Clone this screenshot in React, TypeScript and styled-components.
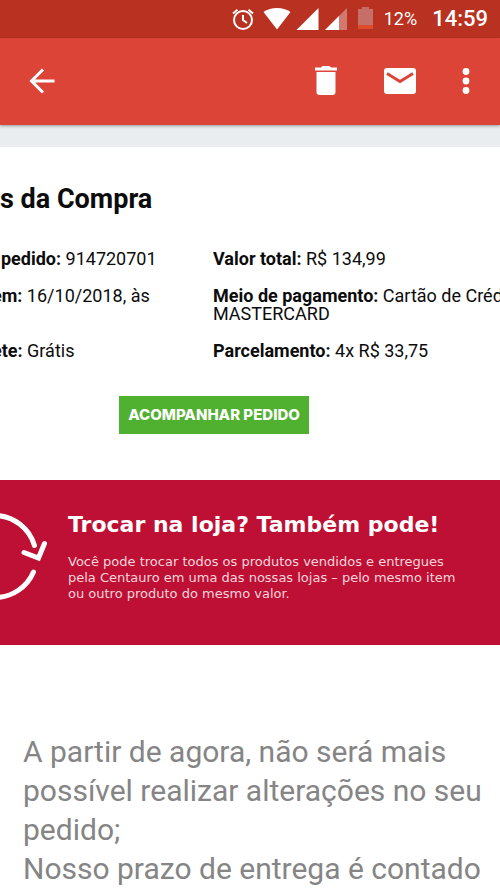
import React from "react";
import styled, { createGlobalStyle } from "styled-components";

const GlobalStyle = createGlobalStyle`
  *, *::before, *::after { box-sizing: border-box; }
  body {
    margin: 0;
    background: #ffffff;
    color: #0c0c0c;
    font-family: Roboto, sans-serif;
    overflow: hidden;
  }
`;

const StatusBar = styled.div`
  display: flex;
  align-items: center;
  justify-content: flex-end;
  height: 38px;
  padding-right: 12px;
  background: #b93221;
  color: #ffffff;

  svg { display: block; }
`;

const StatusIcons = styled.div`
  display: flex;
  align-items: center;
  gap: 5px;

  svg:first-child { margin-right: 3px; }
`;

const Battery = styled.span`
  margin-left: 5px;
  font-size: 18px;
  line-height: 24px;
`;

const Clock = styled.time`
  margin-left: 15px;
  font-size: 22px;
  font-weight: 500;
  line-height: 24px;
`;

const Toolbar = styled.header`
  position: relative;
  display: flex;
  align-items: center;
  justify-content: space-between;
  height: 87px;
  padding: 0 18px 2px;
  background: #db4437;
  box-shadow: 0 1px 3px rgba(0, 0, 0, 0.35);
`;

const Actions = styled.div`
  display: flex;
  align-items: center;
  gap: 26px;
`;

const IconButton = styled.button<{ $width?: number }>`
  display: flex;
  align-items: center;
  justify-content: center;
  width: ${({ $width }) => $width ?? 48}px;
  height: 48px;
  padding: 0;
  border: 0;
  background: none;
  color: #ffffff;
`;

const Strip = styled.div`
  height: 22px;
  background: #e9edf0;
`;

const Summary = styled.section`
  display: flex;
  flex-direction: column;
  padding: 36px 0 46px;
`;

const Title = styled.h1`
  margin: 0;
  font-size: 27px;
  font-weight: 700;
  line-height: 32px;
`;

const Details = styled.dl`
  display: grid;
  grid-template-columns: 221px minmax(0, 1fr);
  row-gap: 19px;
  margin: 35px 0 0 -8px;
  font-size: 18px;
  line-height: 18px;
  white-space: nowrap;
`;

const Detail = styled.div`
  dt, dd { display: inline; margin: 0; }
  dt { font-weight: 700; }
`;

const TrackLink = styled.a`
  align-self: center;
  margin: 36px 72px 0 0;
  padding: 0 9px;
  background: #50b030;
  color: #ffffff;
  font-family: Inter, sans-serif;
  font-size: 15px;
  font-weight: 800;
  line-height: 38px;
  text-decoration: none;
`;

const Banner = styled.section`
  display: flex;
  align-items: flex-start;
  gap: 18px;
  min-height: 165px;
  padding: 31px 20px 30px 0;
  background: #be1034;
  color: #ffffff;
  font-family: "DejaVu Sans", Verdana, sans-serif;

  svg { flex: none; }
`;

const BannerTitle = styled.h2`
  margin: 0 0 15px;
  font-size: 22px;
  font-weight: 700;
  line-height: 28px;
  white-space: nowrap;
`;

const BannerText = styled.p`
  margin: 0;
  font-size: 13px;
  line-height: 16px;
  color: #f8d5dc;
  white-space: nowrap;
`;

const Notes = styled.section`
  padding: 87px 16px 0 23px;
  color: #858585;
  font-size: 30px;
  line-height: 39px;

  p { margin: 0; }
`;

function StatusGlyphs() {
  return (
    <StatusIcons>
      <svg width="24" height="24" viewBox="0 0 24 24" fill="none" stroke="#fff" strokeWidth="2" aria-label="Alarme">
        <circle cx="12" cy="13" r="9" />
        <path d="M12 8v5l4 3M2 6.5 6.5 2.8M22 6.5l-4.500-3.700" />
      </svg>
      <svg width="28" height="24" viewBox="0 0 28 24" fill="#fff" aria-label="Wi-Fi">
        <path d="M0.500 5C8-0.500 20-0.500 27.500 5L14 22.500Z" />
      </svg>
      <svg width="23" height="24" viewBox="0 0 23 24" fill="#fff" aria-label="Sinal 1">
        <path d="M22.500 1v22H0.500Z" />
      </svg>
      <svg width="24" height="24" viewBox="0 0 24 24" fill="#fff" aria-label="Sinal 2">
        <path d="M23 1v22H1Z" opacity="0.350" />
        <path d="M15 9v14H1Z" />
      </svg>
      <svg width="26" height="24" viewBox="0 0 26 24" aria-label="Bateria">
        <path d="M9 0h7v2h4v18H5V2h4Z" fill="#c56f68" />
        <path d="M5 18h15v4H5Z" fill="#df4c2c" />
      </svg>
    </StatusIcons>
  );
}

function ExchangeIcon() {
  return (
    <svg width="50" height="92" viewBox="0 0 50 92" fill="none" stroke="#fff" strokeWidth="5" strokeLinecap="round" aria-hidden="true">
      <path d="M-5 4.500A42 42 0 0 1 34.500 34.500" />
      <path d="M24 41.500 38.500 47 44.500 32.500" />
      <path d="M33.500 61A42 42 0 0 1-5 86.500" />
    </svg>
  );
}

export default function App() {
  return (
    <>
      <GlobalStyle />
      <StatusBar>
        <StatusGlyphs />
        <Battery>12%</Battery>
        <Clock>14:59</Clock>
      </StatusBar>
      <Toolbar>
        <IconButton aria-label="Voltar">
          <svg width="26" height="26" viewBox="0 0 26 26" fill="none" stroke="currentColor" strokeWidth="3">
            <path d="M14 1.500 2.500 13 14 24.500M2 13h23.500" />
          </svg>
        </IconButton>
        <Actions>
          <IconButton aria-label="Excluir">
            <svg width="24" height="30" viewBox="0 0 24 30" fill="currentColor">
              <path d="M1 1.500h6L8.500 0h7L17 1.500h6v3H1zM2.500 6h19v20a3 3 0 0 1-3 3h-13a3 3 0 0 1-3-3z" />
            </svg>
          </IconButton>
          <IconButton aria-label="Marcar como não lida">
            <svg width="32" height="26" viewBox="0 0 32 26">
              <rect width="32" height="26" rx="3" fill="currentColor" />
              <path d="M3 5.500 16 13.500 29 5.500" fill="none" stroke="#db4437" strokeWidth="3" />
            </svg>
          </IconButton>
          <IconButton $width={32} aria-label="Mais opções">
            <svg width="8" height="26" viewBox="0 0 8 26" fill="currentColor">
              <circle cx="4" cy="3.500" r="3.400" />
              <circle cx="4" cy="13" r="3.400" />
              <circle cx="4" cy="22.500" r="3.400" />
            </svg>
          </IconButton>
        </Actions>
      </Toolbar>
      <Strip />
      <main>
        <Summary>
          <Title>s da Compra</Title>
          <Details>
            <Detail><dt>&nbsp;&nbsp;pedido:</dt> <dd>914720701</dd></Detail>
            <Detail><dt>Valor total:</dt> <dd>R$ 134,99</dd></Detail>
            <Detail><dt>em:</dt> <dd>16/10/2018, às</dd></Detail>
            <Detail><dt>Meio de pagamento:</dt> <dd>Cartão de Crédito<br />MASTERCARD</dd></Detail>
            <Detail><dt>ete:</dt> <dd>Grátis</dd></Detail>
            <Detail><dt>Parcelamento:</dt> <dd>4x R$ 33,75</dd></Detail>
          </Details>
          <TrackLink href="#pedido">ACOMPANHAR PEDIDO</TrackLink>
        </Summary>
        <Banner>
          <ExchangeIcon />
          <div>
            <BannerTitle>Trocar na loja? Também pode!</BannerTitle>
            <BannerText>
              Você pode trocar todos os produtos vendidos e entregues<br />
              pela Centauro em uma das nossas lojas – pelo mesmo item<br />
              ou outro produto do mesmo valor.
            </BannerText>
          </div>
        </Banner>
        <Notes>
          <p>A partir de agora, não será mais possível realizar alterações no seu pedido;</p>
          <p>Nosso prazo de entrega é contado</p>
        </Notes>
      </main>
    </>
  );
}
